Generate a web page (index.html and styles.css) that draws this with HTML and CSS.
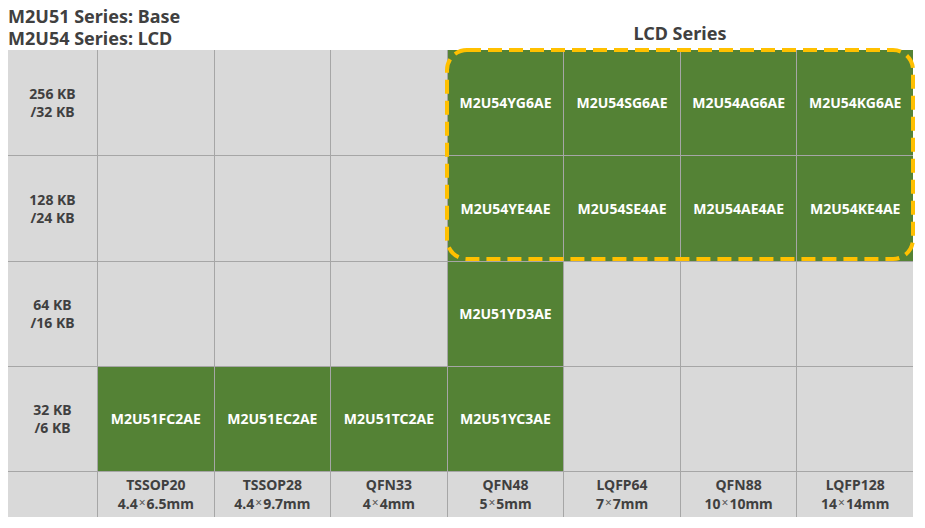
FILE: index.html
```html
<!DOCTYPE html>
<html>
<head>
<meta charset="utf-8">
<link rel="stylesheet" href="styles.css">
</head>
<body>
<div class="page">
  <header class="head">
    <div class="titles">
      <div>M2U51 Series: Base</div>
      <div>M2U54 Series: LCD</div>
    </div>
    <div class="lcd-title">LCD Series</div>
  </header>
  <div class="chart">
    <div class="grid">
      <div class="cell lbl"><span>256 KB<br>/32 KB</span></div>
      <div class="cell"></div><div class="cell"></div><div class="cell"></div>
      <div class="cell g">M2U54YG6AE</div><div class="cell g">M2U54SG6AE</div><div class="cell g">M2U54AG6AE</div><div class="cell g">M2U54KG6AE</div>

      <div class="cell lbl"><span>128 KB<br>/24 KB</span></div>
      <div class="cell"></div><div class="cell"></div><div class="cell"></div>
      <div class="cell g">M2U54YE4AE</div><div class="cell g">M2U54SE4AE</div><div class="cell g">M2U54AE4AE</div><div class="cell g">M2U54KE4AE</div>

      <div class="cell lbl"><span>64 KB<br>/16 KB</span></div>
      <div class="cell"></div><div class="cell"></div><div class="cell"></div>
      <div class="cell g">M2U51YD3AE</div>
      <div class="cell"></div><div class="cell"></div><div class="cell"></div>

      <div class="cell lbl"><span>32 KB<br>/6 KB</span></div>
      <div class="cell g">M2U51FC2AE</div><div class="cell g">M2U51EC2AE</div><div class="cell g">M2U51TC2AE</div><div class="cell g">M2U51YC3AE</div>
      <div class="cell"></div><div class="cell"></div><div class="cell"></div>

      <div class="cell"></div>
      <div class="cell pkg"><span>TSSOP20<br>4.4<span class="x">×</span>6.5mm</span></div>
      <div class="cell pkg"><span>TSSOP28<br>4.4<span class="x">×</span>9.7mm</span></div>
      <div class="cell pkg"><span>QFN33<br>4<span class="x">×</span>4mm</span></div>
      <div class="cell pkg"><span>QFN48<br>5<span class="x">×</span>5mm</span></div>
      <div class="cell pkg"><span>LQFP64<br>7<span class="x">×</span>7mm</span></div>
      <div class="cell pkg"><span>QFN88<br>10<span class="x">×</span>10mm</span></div>
      <div class="cell pkg"><span>LQFP128<br>14<span class="x">×</span>14mm</span></div>
    </div>
    <svg class="lcd-frame" width="472" height="216" viewBox="0 0 472 216">
      <rect x="2" y="2" width="466" height="209" rx="20" ry="20" fill="none" stroke="#FFC000" stroke-width="4" stroke-dasharray="14 7"/>
    </svg>
  </div>
</div>
</body>
</html>
```

FILE: styles.css
```css
html, body {
  margin: 0;
  padding: 0;
  background: #ffffff;
}
.page {
  width: 925px;
  height: 528px;
  font-family: "Noto Sans", "Open Sans", sans-serif;
  font-weight: 700;
  color: #404040;
}
.head {
  display: flex;
  align-items: flex-end;
  height: 50px;
  padding-left: 8px;
  box-sizing: border-box;
}
.titles {
  width: 439px;
  font-size: 18px;
  line-height: 22px;
  padding-bottom: 1px;
}
.lcd-title {
  width: 466px;
  text-align: center;
  font-size: 18px;
  line-height: 22px;
  padding-bottom: 6px;
}
.chart {
  position: relative;
  margin-left: 8px;
  width: 905px;
}
.grid {
  display: grid;
  grid-template-columns: 89px repeat(7, 1fr);
  grid-template-rows: 105px 105px 104px 104px 45px;
  gap: 1px;
  background: #a6a6a6;
  width: 905px;
}
.cell {
  background: #d9d9d9;
  display: flex;
  align-items: center;
  justify-content: center;
  text-align: center;
  font-size: 14px;
  line-height: 18px;
}
.cell.g {
  background: #548235;
  color: #ffffff;
}
.cell.lbl {
  color: #404040;
}
.cell.pkg {
  align-items: flex-start;
  padding-top: 3px;
  line-height: 19px;
}
.x {
  font-weight: 400;
  font-size: 12px;
  color: #595959;
  padding: 0 1px;
  position: relative;
  top: -2px;
}
.lcd-frame {
  position: absolute;
  left: 437px;
  top: -2px;
  pointer-events: none;
}
```
